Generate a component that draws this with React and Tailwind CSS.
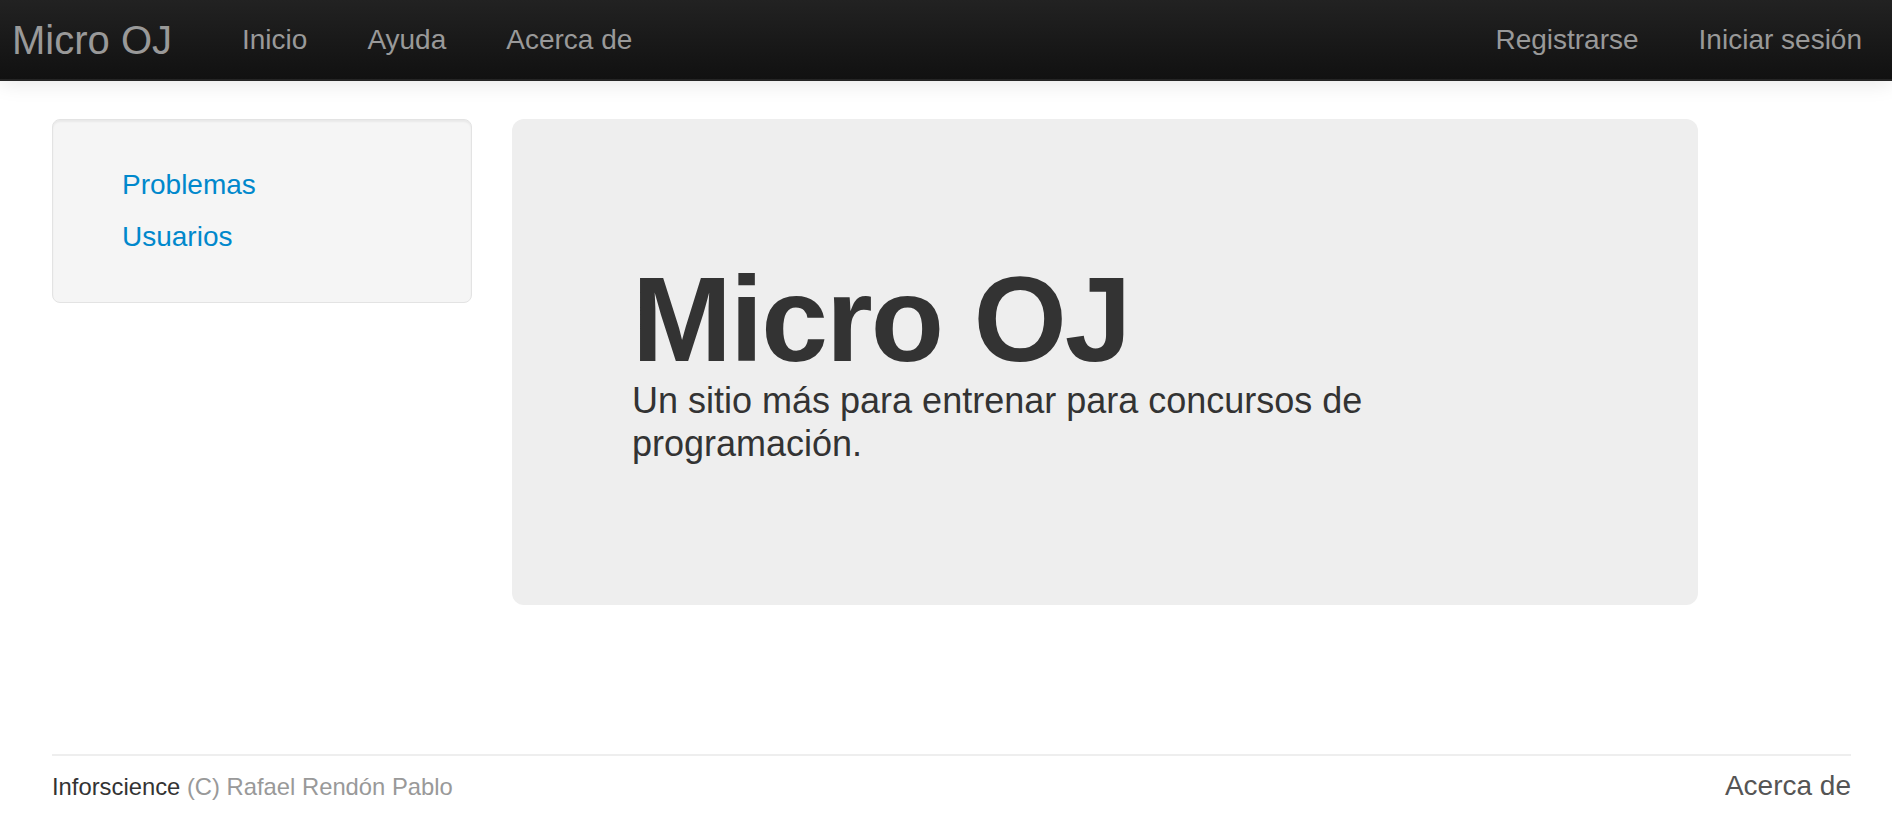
export default function App() {
  const navLinks = ["Inicio", "Ayuda", "Acerca de"];
  const userLinks = ["Registrarse", "Iniciar sesión"];
  const sideLinks = ["Problemas", "Usuarios"];

  return (
    <div className="min-h-screen bg-white font-['Liberation_Sans',Arial,sans-serif] text-[#333]">
      {/* Top navbar */}
      <nav className="flex h-[81px] items-start justify-between border-b-2 border-[#252525] bg-gradient-to-b from-[#222222] to-[#111111] shadow-[0_2px_20px_rgba(0,0,0,0.1)]">
        <div className="flex">
          <a href="#" className="pl-[12px] pr-[40px] pt-[20px] text-[40px] leading-[40px] text-[#999]">
            Micro OJ
          </a>
          <ul className="flex">
            {navLinks.map((name) => (
              <li key={name}>
                <a href="#" className="block px-[30px] pt-[20px] text-[28px] leading-[40px] text-[#999]">
                  {name}
                </a>
              </li>
            ))}
          </ul>
        </div>
        <ul className="flex">
          {userLinks.map((name) => (
            <li key={name}>
              <a href="#" className="block px-[30px] pt-[20px] text-[28px] leading-[40px] text-[#999]">
                {name}
              </a>
            </li>
          ))}
        </ul>
      </nav>

      <div className="pl-[52px] pr-[41px] pt-[38px]">
        <div className="flex items-start gap-[40px]">
          {/* Sidebar */}
          <div className="w-[420px] rounded-[8px] border border-[#e3e3e3] bg-[#f5f5f5] px-[69px] py-[39px] shadow-[inset_0_2px_2px_rgba(0,0,0,0.05)]">
            <ul>
              {sideLinks.map((name) => (
                <li key={name}>
                  <a href="#" className="block py-[6px] text-[28px] leading-[40px] text-[#0088cc]">
                    {name}
                  </a>
                </li>
              ))}
            </ul>
          </div>

          {/* Hero unit */}
          <div className="w-[1186px] rounded-[12px] bg-[#eeeeee] p-[120px]">
            <h1 className="mt-[20px] text-[120px] font-bold leading-[120px] tracking-[-2px] text-[#333]">
              Micro OJ
            </h1>
            <p className="mb-[20px] text-[36px] leading-[43px] text-[#333]">
              Un sitio más para entrenar para concursos de programación.
            </p>
          </div>
        </div>

        {/* Footer */}
        <footer className="mt-[149px]">
          <hr className="border-t-2 border-[#eeeeee]" />
          <div className="mt-[10px] flex justify-between text-[28px] leading-[40px]">
            <p>
              <span className="text-[23.8px] text-[#333]">Inforscience</span>
              <span className="text-[23.8px] text-[#999]"> (C) Rafael Rendón Pablo</span>
            </p>
            <a href="#" className="text-[#555]">
              Acerca de
            </a>
          </div>
        </footer>
      </div>
    </div>
  );
}
